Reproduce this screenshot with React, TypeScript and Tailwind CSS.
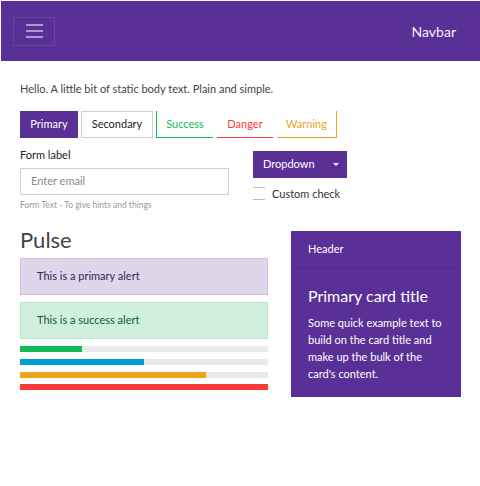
import React from 'react';

export default function App() {
  return (
    <div className="w-[480px] h-[486px] bg-white pl-px pt-px text-[#444] font-['Lato',_'Liberation_Sans',_sans-serif]">
      {/* Navbar */}
      <div className="h-[60px] bg-[#593196] flex items-center justify-between pl-3 pr-6">
        <div className="w-[42px] h-[29px] border border-white/10 flex flex-col items-center justify-center gap-[4px]">
          <span className="block w-[17px] h-[2px] bg-white/50" />
          <span className="block w-[17px] h-[2px] bg-white/50" />
          <span className="block w-[17px] h-[2px] bg-white/50" />
        </div>
        <span className="text-[14px] text-[#f4f0fa]">Navbar</span>
      </div>

      <div className="pl-[19px] pt-[20px]">
        <p className="text-[11px] leading-[16px]">Hello. A little bit of static body text. Plain and simple.</p>

        {/* Button group */}
        <div className="mt-[14px] flex h-[27px] text-[11px]">
          <div className="w-[58px] bg-[#593196] text-white flex items-center justify-center">Primary</div>
          <div className="ml-[3px] w-[72px] border border-[#cfcfcf] text-[#222] flex items-center justify-center">Secondary</div>
          <div className="ml-[3px] w-[57px] border-l border-b border-[#13b955] text-[#13b955] flex items-center justify-center">Success</div>
          <div className="ml-[4px] w-[56px] border-b border-[#fc3939] text-[#fc3939] flex items-center justify-center">Danger</div>
          <div className="ml-[4px] w-[60px] border-r border-b border-[#efa31d] text-[#efa31d] flex items-center justify-center">Warning</div>
        </div>

        {/* Form row */}
        <div className="flex">
          <div className="w-[209px]">
            <div className="mt-[10px] text-[11px] leading-[14px] text-[#222]">Form label</div>
            <div className="mt-[6px] h-[27px] border border-[#cfcfd6] flex items-center pl-[10px] text-[11px] text-[#888]">Enter email</div>
            <div className="mt-[4px] text-[8.5px] leading-[12px] text-[#999]">Form Text - To give hints and things</div>
          </div>
          <div className="ml-[24px] pt-[13px]">
            <div className="w-[94px] h-[27px] bg-[#593196] text-white text-[11px] flex items-center pl-[10px] relative">
              Dropdown
              <span className="absolute right-[8px] top-[12px] w-0 h-0 border-l-[3px] border-r-[3px] border-t-[3px] border-l-transparent border-r-transparent border-t-white/90" />
            </div>
            <div className="mt-[9px] flex items-center">
              <span className="w-[12px] h-[13px] border-y border-[#bbb]" />
              <span className="ml-[7px] text-[11px] leading-[13px] text-[#333]">Custom check</span>
            </div>
          </div>
        </div>

        {/* Lower section */}
        <div className="flex mt-[20px]">
          <div className="w-[248px]">
            <div className="text-[22px] leading-[24px] text-[#444] mt-[-3px]">Pulse</div>
            <div className="mt-[6px] h-[37px] bg-[#ded7eb] border border-[#cdc1e0] flex items-center pl-[16px] text-[11px] text-[#35205a]">This is a primary alert</div>
            <div className="mt-[7px] h-[37px] bg-[#d0f0dd] border border-[#b9e8cc] flex items-center pl-[16px] text-[11px] text-[#0f5a2e]">This is a success alert</div>
            <div className="mt-[7px] flex flex-col">
              {[
                ['25%', '#13b955', 'mt-0'],
                ['50%', '#009cdc', 'mt-[7px]'],
                ['75%', '#efa31d', 'mt-[7px]'],
                ['100%', '#fc3939', 'mt-[6px]'],
              ].map(([w, c, m]) => (
                <div key={c} className={`h-[6px] bg-[#eaeaea] ${m}`}>
                  <div className="h-full" style={{ width: w, background: c }} />
                </div>
              ))}
            </div>
          </div>
          <div className="ml-[23px] w-[170px] h-[166px] bg-[#593196] text-white">
            <div className="h-[37px] border-b border-black/10 flex items-center pl-[17px] text-[11px]">Header</div>
            <div className="px-[17px] pt-[18px]">
              <div className="text-[16px] leading-[20px]">Primary card title</div>
              <p className="mt-[8px] text-[11px] leading-[17px]">Some quick example text to build on the card title and make up the bulk of the card's content.</p>
            </div>
          </div>
        </div>
      </div>
    </div>
  );
}
